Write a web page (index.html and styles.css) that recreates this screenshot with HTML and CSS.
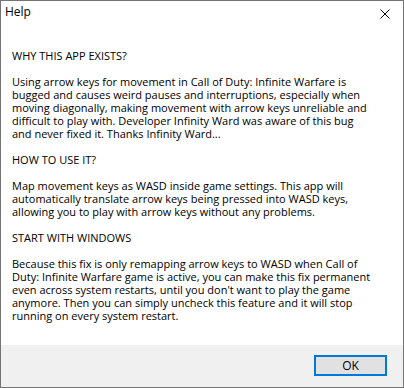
FILE: index.html
```html
<!DOCTYPE html>
<html lang="en">
<head>
    <meta charset="UTF-8">
    <title>Help</title>
    <link rel="stylesheet" href="styles.css">
</head>
<body>
    <div class="window">
        <div class="titlebar">
            <span class="title">Help</span>
            <button type="button" class="close" aria-label="Close">
                <svg width="10" height="10" viewBox="0 0 10 10">
                    <path d="M0.5 0.5 L9.5 9.5 M9.5 0.5 L0.5 9.5" stroke="#000" stroke-width="1" fill="none"/>
                </svg>
            </button>
        </div>

        <div class="content">
            <p>WHY THIS APP EXISTS?</p>
            <p>Using arrow keys for movement in Call of Duty: Infinite Warfare is<br>
            bugged and causes weird pauses and interruptions, especially when<br>
            moving diagonally, making movement with arrow keys unreliable and<br>
            difficult to play with. Developer Infinity Ward was aware of this bug<br>
            and never fixed it. Thanks Infinity Ward...</p>
            <p>HOW TO USE IT?</p>
            <p>Map movement keys as WASD inside game settings. This app will<br>
            automatically translate arrow keys being pressed into WASD keys,<br>
            allowing you to play with arrow keys without any problems.</p>
            <p>START WITH WINDOWS</p>
            <p>Because this fix is only remapping arrow keys to WASD when Call of<br>
            Duty: Infinite Warfare game is active, you can make this fix permanent<br>
            even across system restarts, until you don't want to play the game<br>
            anymore. Then you can simply uncheck this feature and it will stop<br>
            running on every system restart.</p>
        </div>

        <div class="footer">
            <button type="button" class="btn-ok">OK</button>
        </div>
    </div>
</body>
</html>
```
FILE: styles.css
```css
* {
    margin: 0;
    padding: 0;
    box-sizing: border-box;
}

html, body {
    width: 404px;
    height: 388px;
    overflow: hidden;
}

body {
    font-family: 'Open Sans', sans-serif;
    color: #000;
    background: #fff;
}

.window {
    width: 404px;
    height: 388px;
    border: 1px solid #747474;
    display: flex;
    flex-direction: column;
    background: #fff;
}

.titlebar {
    height: 29px;
    display: flex;
    justify-content: space-between;
    align-items: flex-start;
    padding: 3px 0 0 4px;
}

.title {
    font-size: 12px;
    line-height: 16px;
}

.close {
    width: 46px;
    height: 28px;
    border: none;
    background: transparent;
    display: flex;
    align-items: center;
    justify-content: center;
    margin-top: -3px;
    padding: 0 0 2px 10px;
}

.close svg {
    display: block;
}

.content {
    flex: 1;
    padding: 19px 0 0 11px;
    font-size: 11px;
    line-height: 13px;
    white-space: nowrap;
}

.content p {
    margin-bottom: 13px;
}

.footer {
    height: 42px;
    background: #f0f0f0;
    display: flex;
    justify-content: flex-end;
    align-items: flex-start;
    padding: 10px 16px 0 0;
}

.btn-ok {
    width: 73px;
    height: 21px;
    border: 2px solid #0078d7;
    background: #e1e1e1;
    font-family: 'Open Sans', sans-serif;
    font-size: 12px;
    line-height: 16px;
    color: #000;
}
```
